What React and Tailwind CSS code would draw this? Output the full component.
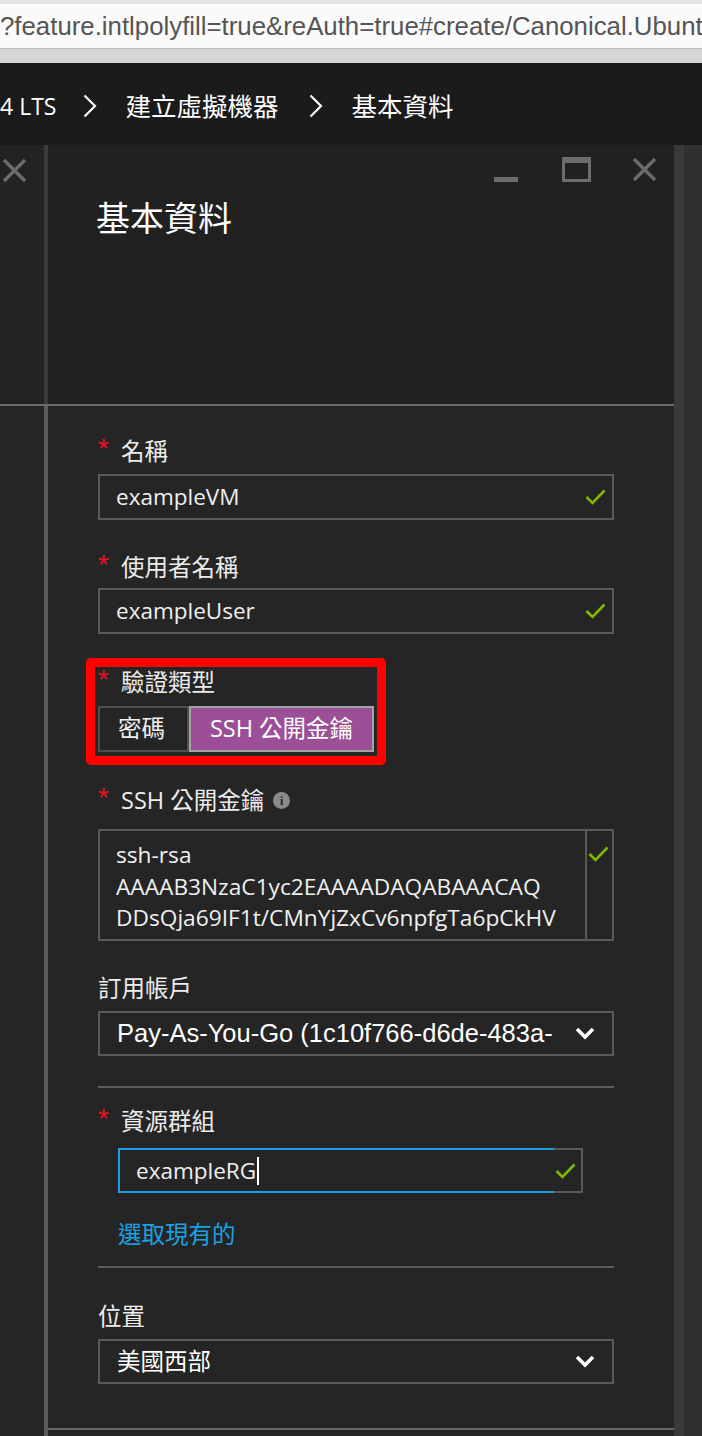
import React from 'react';

const Check = () => (
  <svg width="21" height="16" viewBox="0 0 21 16" className="shrink-0">
    <polyline points="1.5,8 7.5,14 19.5,1.5" fill="none" stroke="#7fba00" strokeWidth="2.6" />
  </svg>
);

const ChevronDown = () => (
  <svg width="20" height="13" viewBox="0 0 20 13" className="shrink-0">
    <polyline points="2,2 10,10 18,2" fill="none" stroke="#ffffff" strokeWidth="3.6" />
  </svg>
);

const Crumb = () => (
  <svg width="14" height="24" viewBox="0 0 14 24" className="shrink-0">
    <polyline points="1.5,1.5 12,12 1.5,22.5" fill="none" stroke="#ffffff" strokeWidth="2.2" />
  </svg>
);

const CloseX = () => (
  <svg width="25" height="25" viewBox="0 0 25 25" className="shrink-0">
    <path d="M2 2 L23 23 M23 2 L2 23" stroke="#6c6c6c" strokeWidth="3.4" />
  </svg>
);

function Label({ text, required, info }) {
  return (
    <div className="flex items-center h-[30px] text-[23.5px] text-[#ececec] whitespace-nowrap">
      {required && (
        <span className="w-[23px] h-[30px] text-[#e81123] text-[28px] leading-[28px] font-['Liberation_Sans',sans-serif]">*</span>
      )}
      <span className="pt-[3px]">{text}</span>
      {info && (
        <span className="ml-[9px] mt-[3px] w-[17px] h-[17px] rounded-full bg-[#8a8a8a] flex items-center justify-center text-[#262626] text-[12px] font-bold leading-none font-['Liberation_Serif',serif]">
          i
        </span>
      )}
    </div>
  );
}

function TextInput({ value }) {
  return (
    <div className="h-[46px] border-2 border-[#5a5a5a] flex items-center pl-[16px] pr-[6px] text-[22.5px] text-[#f0f0f0]">
      <span className="flex-1">{value}</span>
      <Check />
    </div>
  );
}

function Select({ value, latin }) {
  return (
    <div className="h-[45px] border-2 border-[#5a5a5a] flex items-center pl-[17px] pr-[17px] text-[#ffffff]">
      <span
        className={
          latin
            ? "flex-1 text-[25.5px] font-['Liberation_Sans','Noto_Sans_CJK_TC',sans-serif] whitespace-nowrap overflow-hidden"
            : 'flex-1 text-[23.5px] whitespace-nowrap'
        }
      >
        {value}
      </span>
      <ChevronDown />
    </div>
  );
}

export default function App() {
  return (
    <div className="w-[702px] h-[1436px] overflow-hidden flex flex-col bg-[#252525] font-['Open_Sans','Noto_Sans_CJK_TC',sans-serif]">
      {/* address bar */}
      <div className="h-[4px] bg-[#e4e4e4]" />
      <div className="h-[44px] bg-[#fafafa] flex items-center whitespace-nowrap overflow-hidden text-[25.8px] text-[#555555] font-['Liberation_Sans',sans-serif]">
        ?feature.intlpolyfill=true&amp;reAuth=true#create/Canonical.Ubunt
      </div>
      <div className="h-[1px] bg-[#b9b9b9]" />
      <div className="h-[14px] bg-[#d6d6d6]" />

      {/* breadcrumb */}
      <div className="h-[82px] bg-[#1b1b1b] flex items-center pt-[4px] text-[25.5px] text-white whitespace-nowrap">
        <span className="text-[23px]">4 LTS</span>
        <span className="ml-[27px]"><Crumb /></span>
        <span className="ml-[28px]">建立虛擬機器</span>
        <span className="ml-[31px]"><Crumb /></span>
        <span className="ml-[28px]">基本資料</span>
      </div>

      {/* blades */}
      <div className="flex-1 flex min-h-0">
        <div className="w-[674px] flex flex-col">
          {/* header row */}
          <div className="h-[259px] flex">
            <div className="w-[44px] bg-[#232323] pt-[13px] pl-[2px]">
              <CloseX />
            </div>
            <div className="w-[4px] bg-[#3a3a3a]" />
            <div className="flex-1 bg-[#212121] flex flex-col">
              <div className="flex items-end justify-end h-[25px] mt-[12px] pr-[17px]">
                <div className="w-[24px] h-[5px] bg-[#6c6c6c]" />
                <div className="ml-[44px] w-[29px] h-[25px] border-[3px] border-t-[6px] border-[#6c6c6c]" />
                <div className="ml-[41px]"><CloseX /></div>
              </div>
              <div className="mt-[16px] pl-[48px] text-[34px] leading-[40px] text-white">基本資料</div>
            </div>
          </div>
          <div className="h-[2px] bg-[#6a6a6a]" />

          {/* body row */}
          <div className="flex-1 flex">
            <div className="w-[44px] bg-[#252525]" />
            <div className="w-[4px] bg-[#5a5a5a]" />
            <div className="flex-1 bg-[#252525] flex flex-col">
              <div className="pl-[50px] w-[566px] pt-[29px]">
                <Label text="名稱" required />
                <div className="mt-[9px]"><TextInput value="exampleVM" /></div>

                <div className="mt-[31px]"><Label text="使用者名稱" required /></div>
                <div className="mt-[7px]"><TextInput value="exampleUser" /></div>

                <div className="mt-[32px] relative">
                  <div className="absolute left-[-12px] top-[-8px] w-[300px] h-[107px] border-[9px] border-[#ff0000] rounded-[5px]" />
                  <Label text="驗證類型" required />
                  <div className="mt-[10px] flex h-[46px] text-[23.5px]">
                    <div className="w-[91px] border-2 border-[#4f4f4f] flex items-center justify-center text-[#f0f0f0] pr-[4px]">密碼</div>
                    <div className="w-[185px] border-2 border-[#a4a4a4] bg-[#9b4f96] flex items-center justify-center text-white">
                      SSH 公開金鑰
                    </div>
                  </div>
                </div>

                <div className="mt-[32px]"><Label text="SSH 公開金鑰" required info /></div>
                <div className="mt-[15px] h-[112px] border-2 border-[#5a5a5a] flex">
                  <div className="flex-1 pl-[16px] pt-[8px] text-[22.7px] leading-[31.5px] text-[#f0f0f0] whitespace-nowrap overflow-hidden">
                    <div>ssh-rsa</div>
                    <div>AAAAB3NzaC1yc2EAAAADAQABAAACAQ</div>
                    <div>DDsQja69IF1t/CMnYjZxCv6npfgTa6pCkHV</div>
                  </div>
                  <div className="w-[27px] border-l-2 border-[#5a5a5a] pt-[15px] pl-[1px]">
                    <Check />
                  </div>
                </div>

                <div className="mt-[31px]"><Label text="訂用帳戶" /></div>
                <div className="mt-[9px]"><Select value="Pay-As-You-Go (1c10f766-d6de-483a-" latin /></div>

                <div className="mt-[30px] h-[2px] bg-[#5c5c5c]" />

                <div className="mt-[17px]"><Label text="資源群組" required /></div>
                <div className="mt-[13px] ml-[20px] w-[465px] h-[45px] flex">
                  <div className="w-[436px] border-y-2 border-l-2 border-[#1aa1e2] flex items-center pl-[16px] text-[22.5px] text-[#f0f0f0]">
                    exampleRG
                    <span className="ml-[1px] w-[2px] h-[28px] bg-white" />
                  </div>
                  <div className="flex-1 border-y-2 border-r-2 border-[#5a5a5a] flex items-center pl-[1px]">
                    <Check />
                  </div>
                </div>

                <div className="mt-[27px] ml-[20px] h-[30px] flex items-center text-[23.5px] text-[#1ba1e2]">選取現有的</div>

                <div className="mt-[16px] h-[2px] bg-[#5c5c5c]" />

                <div className="mt-[32px]"><Label text="位置" /></div>
                <div className="mt-[9px]"><Select value="美國西部" /></div>
              </div>
              <div className="mt-[44px] h-[2px] bg-[#666666]" />
            </div>
          </div>
        </div>
        <div className="w-[10px] bg-[#393939]" />
        <div className="flex-1 bg-[#303030]" />
      </div>
    </div>
  );
}
